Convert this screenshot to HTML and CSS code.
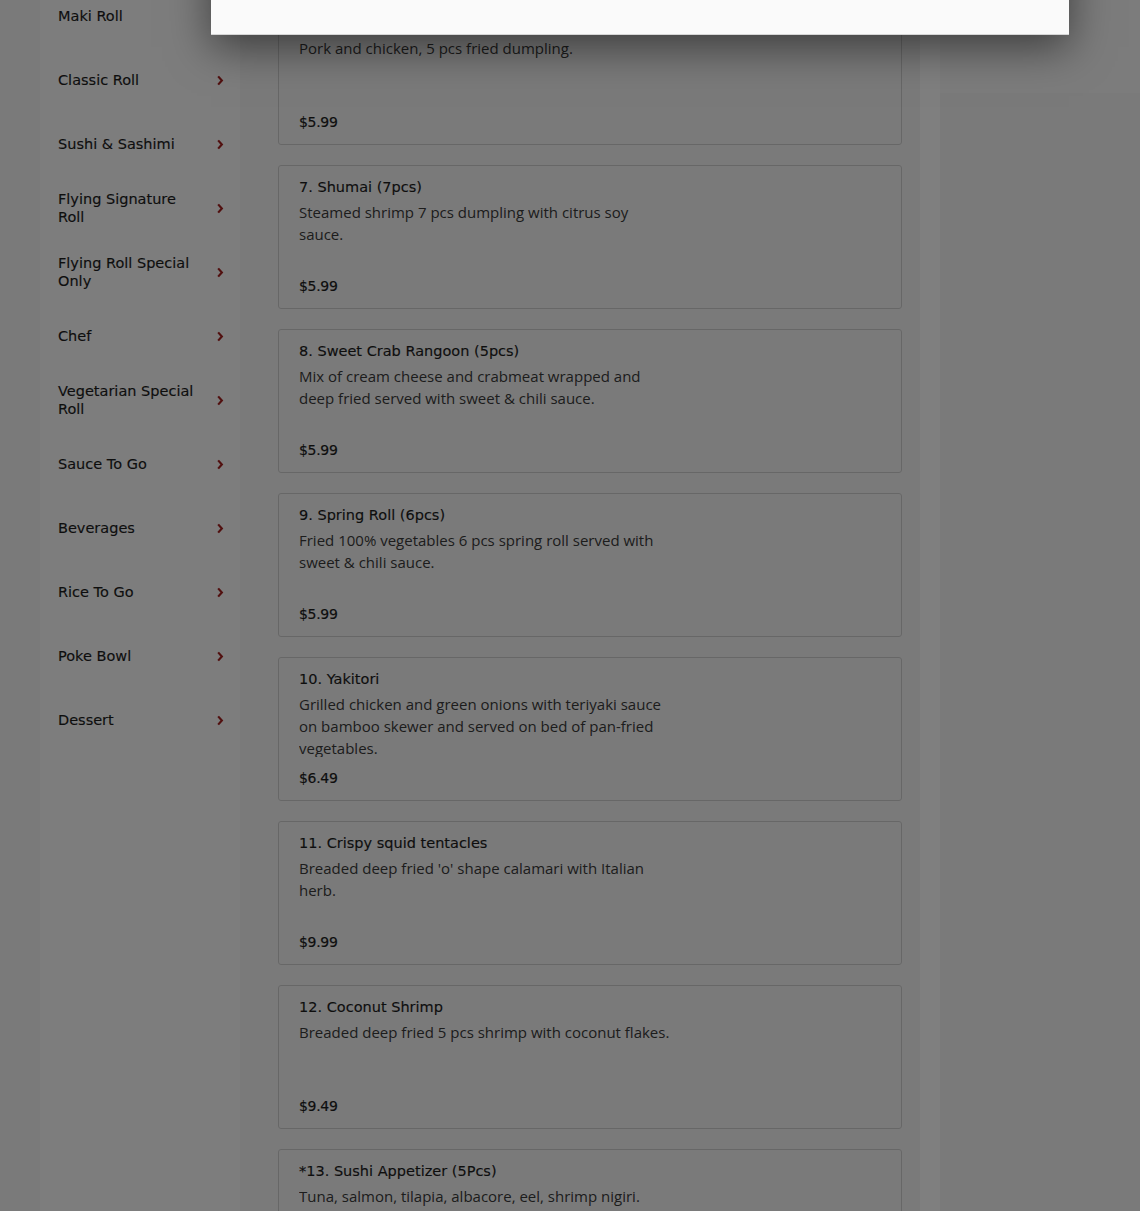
FILE: index.html
```html
<!DOCTYPE html>
<html lang="en">
<head>
    <meta charset="UTF-8">
    <title>Menu - Appetizer</title>
    <link rel="stylesheet" href="styles.css">
</head>
<body>
    <div class="menu-page">
        <ul class="category-list">
            <li class="category"><span>Maki Roll</span><svg class="chevron" viewBox="0 0 8 12"><path d="M2 1.5 L6 6 L2 10.5"/></svg></li>
            <li class="category"><span>Classic Roll</span><svg class="chevron" viewBox="0 0 8 12"><path d="M2 1.5 L6 6 L2 10.5"/></svg></li>
            <li class="category"><span>Sushi &amp; Sashimi</span><svg class="chevron" viewBox="0 0 8 12"><path d="M2 1.5 L6 6 L2 10.5"/></svg></li>
            <li class="category"><span>Flying Signature Roll</span><svg class="chevron" viewBox="0 0 8 12"><path d="M2 1.5 L6 6 L2 10.5"/></svg></li>
            <li class="category"><span>Flying Roll Special Only</span><svg class="chevron" viewBox="0 0 8 12"><path d="M2 1.5 L6 6 L2 10.5"/></svg></li>
            <li class="category"><span>Chef</span><svg class="chevron" viewBox="0 0 8 12"><path d="M2 1.5 L6 6 L2 10.5"/></svg></li>
            <li class="category"><span>Vegetarian Special Roll</span><svg class="chevron" viewBox="0 0 8 12"><path d="M2 1.5 L6 6 L2 10.5"/></svg></li>
            <li class="category"><span>Sauce To Go</span><svg class="chevron" viewBox="0 0 8 12"><path d="M2 1.5 L6 6 L2 10.5"/></svg></li>
            <li class="category"><span>Beverages</span><svg class="chevron" viewBox="0 0 8 12"><path d="M2 1.5 L6 6 L2 10.5"/></svg></li>
            <li class="category"><span>Rice To Go</span><svg class="chevron" viewBox="0 0 8 12"><path d="M2 1.5 L6 6 L2 10.5"/></svg></li>
            <li class="category"><span>Poke Bowl</span><svg class="chevron" viewBox="0 0 8 12"><path d="M2 1.5 L6 6 L2 10.5"/></svg></li>
            <li class="category"><span>Dessert</span><svg class="chevron" viewBox="0 0 8 12"><path d="M2 1.5 L6 6 L2 10.5"/></svg></li>
        </ul>

        <div class="item-list">
            <div class="item-card">
                <h4 class="item-name">6. Gyoza (5pcs)</h4>
                <p class="item-desc">Pork and chicken, 5 pcs fried dumpling.</p>
                <div class="item-price">$5.99</div>
            </div>
            <div class="item-card">
                <h4 class="item-name">7. Shumai (7pcs)</h4>
                <p class="item-desc">Steamed shrimp 7 pcs dumpling with citrus soy sauce.</p>
                <div class="item-price">$5.99</div>
            </div>
            <div class="item-card">
                <h4 class="item-name">8. Sweet Crab Rangoon (5pcs)</h4>
                <p class="item-desc">Mix of cream cheese and crabmeat wrapped and deep fried served with sweet &amp; chili sauce.</p>
                <div class="item-price">$5.99</div>
            </div>
            <div class="item-card">
                <h4 class="item-name">9. Spring Roll (6pcs)</h4>
                <p class="item-desc">Fried 100% vegetables 6 pcs spring roll served with sweet &amp; chili sauce.</p>
                <div class="item-price">$5.99</div>
            </div>
            <div class="item-card">
                <h4 class="item-name">10. Yakitori</h4>
                <p class="item-desc">Grilled chicken and green onions with teriyaki sauce on bamboo skewer and served on bed of pan-fried vegetables.</p>
                <div class="item-price">$6.49</div>
            </div>
            <div class="item-card">
                <h4 class="item-name">11. Crispy squid tentacles</h4>
                <p class="item-desc">Breaded deep fried 'o' shape calamari with Italian herb.</p>
                <div class="item-price">$9.99</div>
            </div>
            <div class="item-card">
                <h4 class="item-name">12. Coconut Shrimp</h4>
                <p class="item-desc">Breaded deep fried 5 pcs shrimp with coconut flakes.</p>
                <div class="item-price">$9.49</div>
            </div>
            <div class="item-card">
                <h4 class="item-name">*13. Sushi Appetizer (5Pcs)</h4>
                <p class="item-desc">Tuna, salmon, tilapia, albacore, eel, shrimp nigiri.</p>
                <div class="item-price">$8.99</div>
            </div>
        </div>

        <div class="cart-column">
            <div class="cart-head"></div>
        </div>
    </div>

    <!-- modal open over the menu -->
    <div class="backdrop"></div>
    <div class="modal-box"></div>
</body>
</html>
```

FILE: styles.css
```css
body {
    margin: 0;
    background-color: #f5f5f5;
    font-family: "Open Sans", sans-serif;
    overflow: hidden;
}
.menu-page {
    display: flex;
    align-items: flex-start;
    padding-left: 40px;
}
.category-list {
    list-style: none;
    width: 200px;
    min-height: 1300px;
    margin: -16px 0 0 0;
    padding: 0;
    background-color: #fbfbfb;
}
.category {
    height: 64px;
    display: flex;
    align-items: center;
    justify-content: space-between;
    padding: 0 16px 0 18px;
    font-family: "DejaVu Sans", sans-serif;
    font-size: 14.5px;
    line-height: 18px;
    color: #1c1c1c;
    -webkit-text-stroke: 0.15px #1c1c1c;
}
.category span {
    max-width: 148px;
}
.chevron {
    width: 8px;
    height: 11px;
    flex-shrink: 0;
}
.chevron path {
    fill: none;
    stroke: #a3201f;
    stroke-width: 2.4;
}
.item-list {
    width: 624px;
    margin-left: 38px;
    padding-top: 1px;
    min-height: 1300px;
}
.item-card {
    border: 1px solid #cfcfcf;
    border-radius: 3px;
    padding: 11px 20px 12px 20px;
    margin-bottom: 20px;
}
.item-name {
    margin: 0;
    font-family: "DejaVu Sans", sans-serif;
    font-weight: normal;
    font-size: 14.5px;
    line-height: 20px;
    color: #1c1c1c;
    -webkit-text-stroke: 0.15px #1c1c1c;
}
.item-desc {
    margin: 4px 0 0 0;
    width: 372px;
    height: 64px;
    overflow: hidden;
    font-size: 15px;
    line-height: 22px;
    color: #3a3a3a;
}
.item-price {
    margin-top: 11px;
    font-family: "DejaVu Sans", sans-serif;
    font-size: 14px;
    line-height: 20px;
    letter-spacing: -0.3px;
    color: #1c1c1c;
    -webkit-text-stroke: 0.2px #1c1c1c;
}
.cart-column {
    width: 200px;
    margin-left: 18px;
    min-height: 1300px;
    border-left: 20px solid #fefefe;
}
.cart-head {
    height: 93px;
    background-color: #f9f9f9;
}
.backdrop {
    position: fixed;
    inset: 0;
    background-color: rgba(0, 0, 0, 0.5);
}
.modal-box {
    position: fixed;
    left: 211px;
    top: -100px;
    width: 858px;
    height: 134px;
    background-color: #fafafa;
    border-bottom: 1px solid #d6d6d6;
    box-shadow: 0 12px 40px rgba(0, 0, 0, 0.5);
}
```
